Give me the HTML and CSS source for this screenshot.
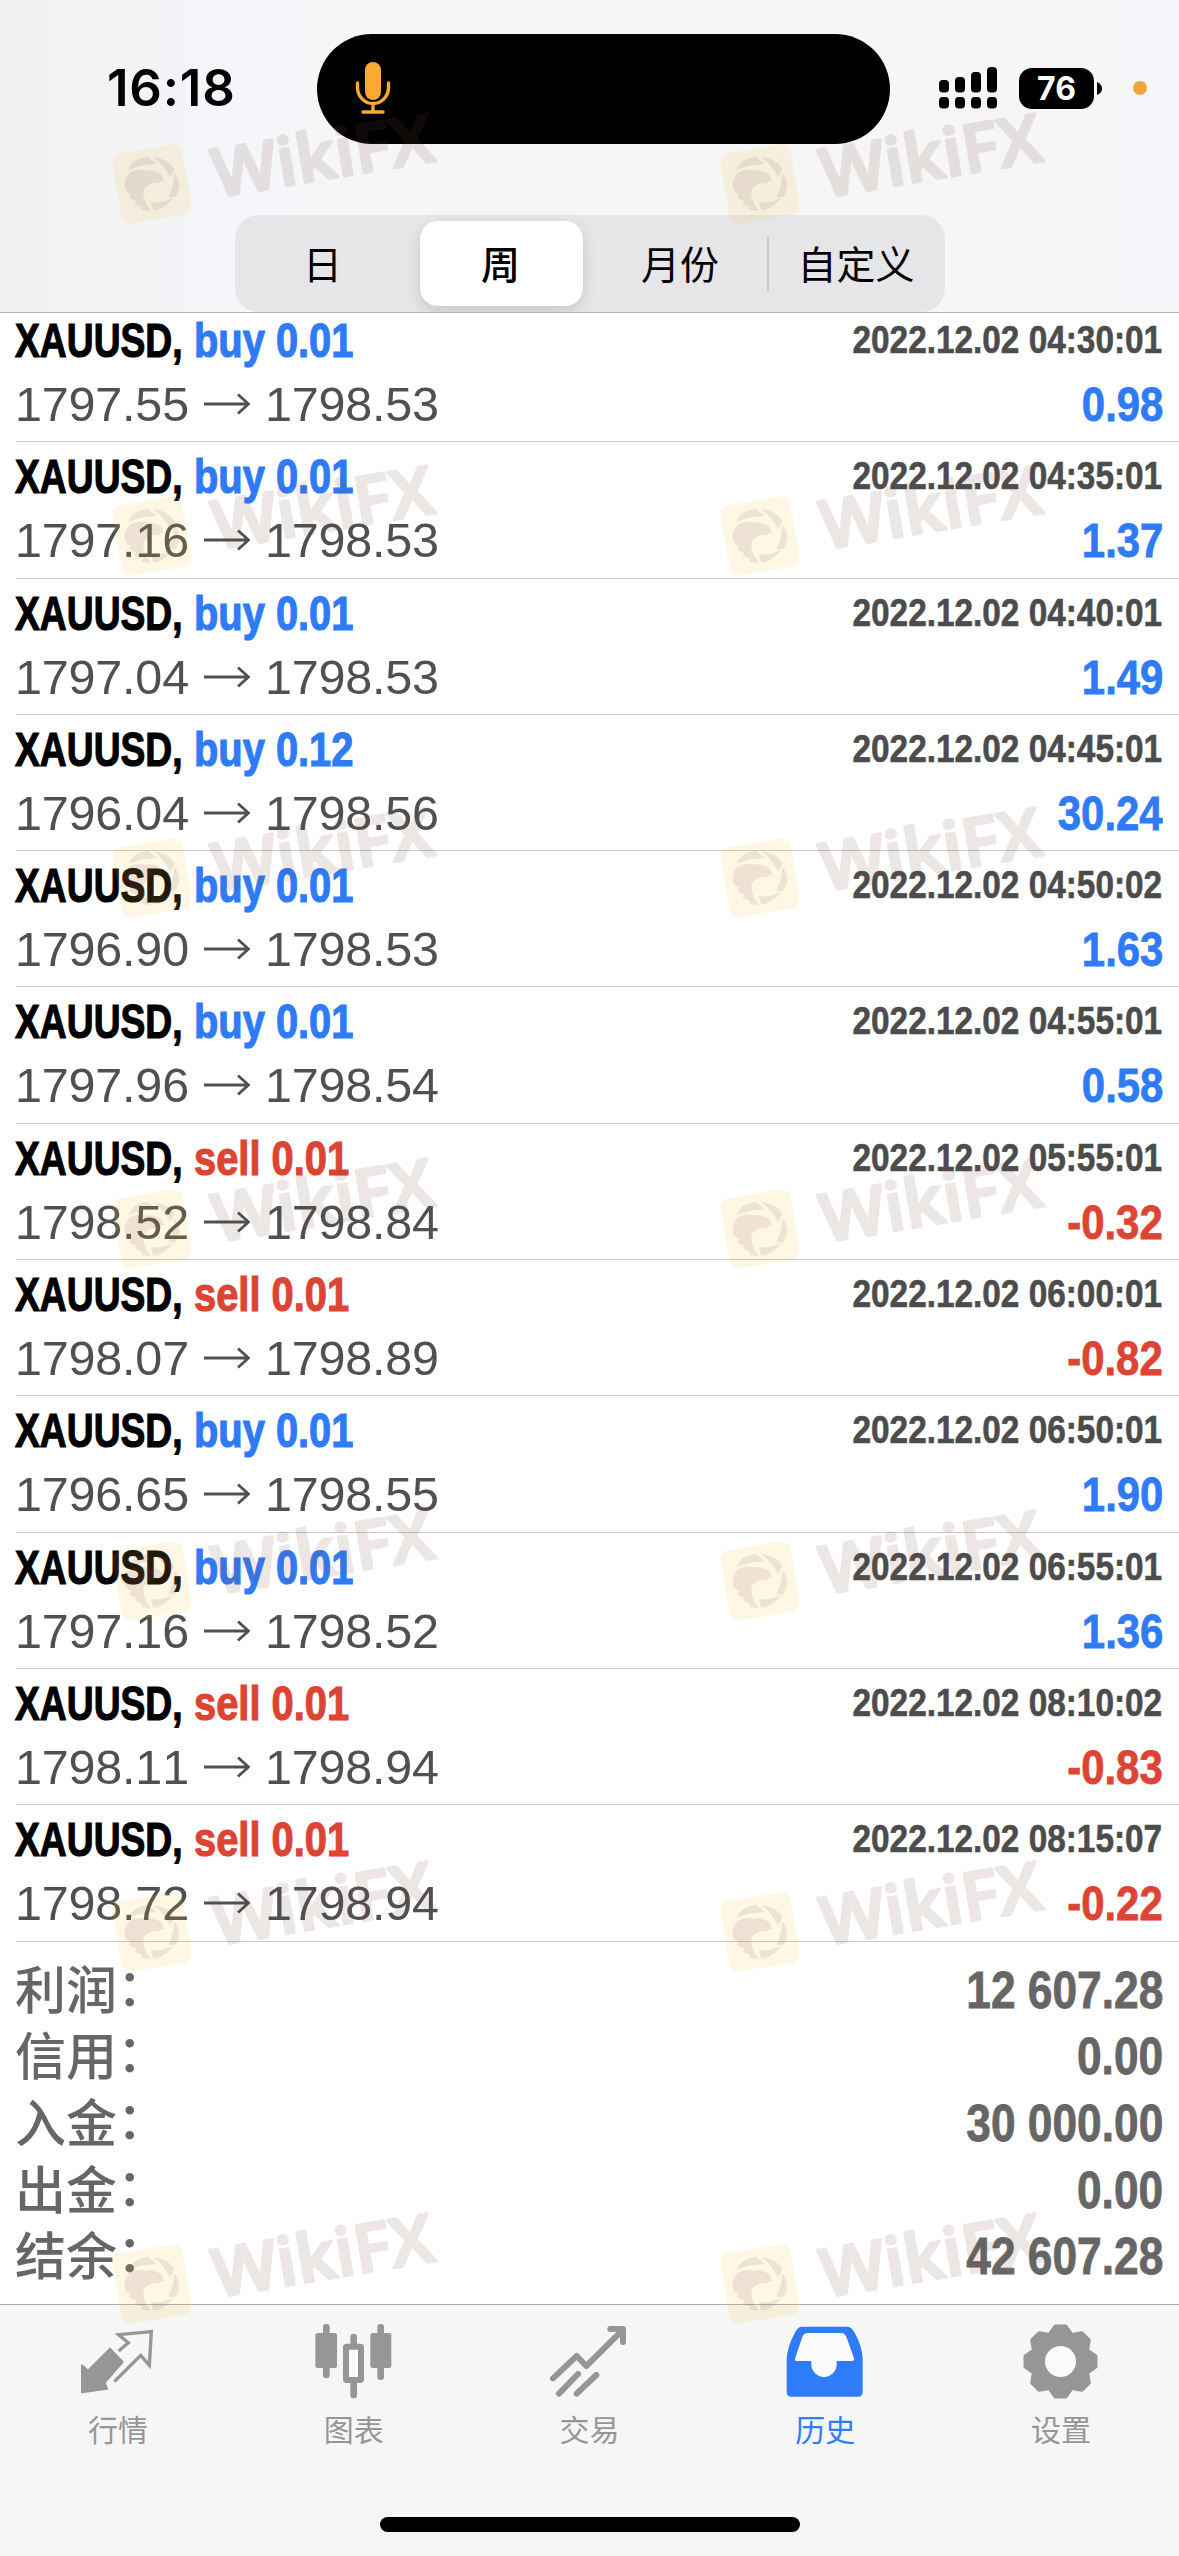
FILE: index.html
```html
<!DOCTYPE html>
<html lang="zh-CN">
<head>
<meta charset="utf-8">
<title>历史</title>
<link rel="stylesheet" href="styles.css">
</head>
<body>
<svg class="defs" aria-hidden="true">
  <symbol id="arrow" viewBox="0 0 46 24"><path d="M0 12H44M34 2.5 44.5 12 34 21.5" fill="none" stroke="#505050" stroke-width="2.8"/></symbol>
  <symbol id="mark" viewBox="0 0 340 140">
    <rect x="5.5" y="54.500" width="71" height="71" rx="9" transform="rotate(-9.5 41 90)" fill="rgba(248,196,50,.13)"/>
    <g transform="translate(-19 30.700) scale(.3333)" fill="rgba(115,72,90,.12)">
      <path d="M109 135Q124 100 168 96L194 118Q150 120 109 135Z"/>
      <path d="M184 97Q228 102 248 134L234 158Q215 120 184 97Z"/>
      <path d="M247 145Q262 162 262 186Q258 205 250 217L228 218Q246 185 247 145Z"/>
      <path d="M176 233Q212 236 243 220Q226 249 184 258Z"/>
      <path d="M98 190Q96 160 112 145Q135 130 165 138Q180 134 200 144Q214 152 215 170L200 168Q208 178 196 176Q180 172 172 180Q156 184 154 202Q152 228 176 257Q162 260 148 254L150 244Q138 246 128 236L132 226Q116 226 112 214L118 206Q104 204 103 196Z"/>
    </g>
    <text class="mark-text" transform="translate(105.500 103.500) rotate(-9.5)" textLength="223" lengthAdjust="spacingAndGlyphs">WikiFX</text>
  </symbol>
</svg>

<div class="screen">
  <header class="header">
    <div class="status">
      <div class="time">16:18</div>
      <div class="island">
        <svg width="36" height="54" viewBox="0 0 36 54"><rect x="10" y="1" width="16" height="38" rx="8" fill="#fba834"/><path d="M2.500 22v4.500a15.500 16 0 0 0 31 0V22M18 43v8M8 51H28" fill="none" stroke="#fba834" stroke-width="3.400" stroke-linecap="round"/></svg>
      </div>
      <div class="indicators">
        <svg width="59" height="42" viewBox="0 0 59 42"><g><rect x="0" y="13" width="10" height="12.500" rx="4"/><rect x="16" y="10" width="10" height="15.500" rx="4"/><rect x="32" y="5" width="10" height="20.500" rx="4"/><rect x="48" y="0" width="10" height="25.500" rx="4"/><rect x="0" y="30" width="10" height="11.500" rx="4"/><rect x="16" y="30" width="10" height="11.500" rx="4"/><rect x="32" y="30" width="10" height="11.500" rx="4"/><rect x="48" y="30" width="10" height="11.500" rx="4"/></g></svg>
        <div class="battery">76</div>
        <svg class="nub" width="5" height="13" viewBox="0 0 5 13"><path d="M0 0Q5 2 5 6.500T0 13Z"/></svg>
        <div class="dot"></div>
      </div>
    </div>
    <nav class="segments">
      <div class="segment">日</div>
      <div class="segment selected">周</div>
      <div class="segment">月份</div>
      <div class="divider"></div>
      <div class="segment">自定义</div>
    </nav>
  </header>

  <main class="list" id="list">
    <div class="row"><div class="deal"><b>XAUUSD,</b><b class="side buy">buy 0.01</b></div><time>2022.12.02 04:30:01</time><div class="prices"><span>1797.55</span><svg><use href="#arrow"/></svg><span>1798.53</span></div><b class="profit buy">0.98</b></div>
    <div class="row"><div class="deal"><b>XAUUSD,</b><b class="side buy">buy 0.01</b></div><time>2022.12.02 04:35:01</time><div class="prices"><span>1797.16</span><svg><use href="#arrow"/></svg><span>1798.53</span></div><b class="profit buy">1.37</b></div>
    <div class="row"><div class="deal"><b>XAUUSD,</b><b class="side buy">buy 0.01</b></div><time>2022.12.02 04:40:01</time><div class="prices"><span>1797.04</span><svg><use href="#arrow"/></svg><span>1798.53</span></div><b class="profit buy">1.49</b></div>
    <div class="row"><div class="deal"><b>XAUUSD,</b><b class="side buy">buy 0.12</b></div><time>2022.12.02 04:45:01</time><div class="prices"><span>1796.04</span><svg><use href="#arrow"/></svg><span>1798.56</span></div><b class="profit buy">30.24</b></div>
    <div class="row"><div class="deal"><b>XAUUSD,</b><b class="side buy">buy 0.01</b></div><time>2022.12.02 04:50:02</time><div class="prices"><span>1796.90</span><svg><use href="#arrow"/></svg><span>1798.53</span></div><b class="profit buy">1.63</b></div>
    <div class="row"><div class="deal"><b>XAUUSD,</b><b class="side buy">buy 0.01</b></div><time>2022.12.02 04:55:01</time><div class="prices"><span>1797.96</span><svg><use href="#arrow"/></svg><span>1798.54</span></div><b class="profit buy">0.58</b></div>
    <div class="row"><div class="deal"><b>XAUUSD,</b><b class="side sell">sell 0.01</b></div><time>2022.12.02 05:55:01</time><div class="prices"><span>1798.52</span><svg><use href="#arrow"/></svg><span>1798.84</span></div><b class="profit sell">-0.32</b></div>
    <div class="row"><div class="deal"><b>XAUUSD,</b><b class="side sell">sell 0.01</b></div><time>2022.12.02 06:00:01</time><div class="prices"><span>1798.07</span><svg><use href="#arrow"/></svg><span>1798.89</span></div><b class="profit sell">-0.82</b></div>
    <div class="row"><div class="deal"><b>XAUUSD,</b><b class="side buy">buy 0.01</b></div><time>2022.12.02 06:50:01</time><div class="prices"><span>1796.65</span><svg><use href="#arrow"/></svg><span>1798.55</span></div><b class="profit buy">1.90</b></div>
    <div class="row"><div class="deal"><b>XAUUSD,</b><b class="side buy">buy 0.01</b></div><time>2022.12.02 06:55:01</time><div class="prices"><span>1797.16</span><svg><use href="#arrow"/></svg><span>1798.52</span></div><b class="profit buy">1.36</b></div>
    <div class="row"><div class="deal"><b>XAUUSD,</b><b class="side sell">sell 0.01</b></div><time>2022.12.02 08:10:02</time><div class="prices"><span>1798.11</span><svg><use href="#arrow"/></svg><span>1798.94</span></div><b class="profit sell">-0.83</b></div>
    <div class="row"><div class="deal"><b>XAUUSD,</b><b class="side sell">sell 0.01</b></div><time>2022.12.02 08:15:07</time><div class="prices"><span>1798.72</span><svg><use href="#arrow"/></svg><span>1798.94</span></div><b class="profit sell">-0.22</b></div>
  </main>

  <section class="summary">
    <div class="total"><span>利润<i lang="zh-TW">：</i></span><b>12 607.28</b></div>
    <div class="total"><span>信用<i lang="zh-TW">：</i></span><b>0.00</b></div>
    <div class="total"><span>入金<i lang="zh-TW">：</i></span><b>30 000.00</b></div>
    <div class="total"><span>出金<i lang="zh-TW">：</i></span><b>0.00</b></div>
    <div class="total"><span>结余<i lang="zh-TW">：</i></span><b>42 607.28</b></div>
  </section>

  <footer class="footer">
    <nav class="tabs">
      <div class="tab">
        <svg viewBox="-6 18 300 270"><path d="M120 116 158 156 104 218 111 236 36 247 36 166 54 182Z" fill="#969696" stroke="#969696" stroke-width="6" stroke-linejoin="round"/><path d="M146 123 175 98 146 74 244 65 238 166 212 136 133 215" fill="none" stroke="#969696" stroke-width="10"/></svg>
        行情</div>
      <div class="tab">
        <svg viewBox="701 18 300 270"><g fill="#969696"><rect x="735" y="69" width="65" height="105" rx="7"/><rect x="758" y="42" width="20" height="163" rx="9"/><rect x="900" y="69" width="63" height="105" rx="7"/><rect x="921" y="42" width="20" height="168" rx="9"/><rect x="840" y="71" width="20" height="50" rx="9"/><rect x="840" y="205" width="20" height="60" rx="9"/></g><rect x="827" y="110" width="45" height="100" rx="2" fill="#fbfbfb" stroke="#969696" stroke-width="18" stroke-linejoin="round"/></svg>
        图表</div>
      <div class="tab">
        <svg viewBox="-1 18 300 270"><path d="M41 205 112 138 141 168 245 65M213 57H251V96M116 192 59 251M171 195 112 251" fill="none" stroke="#969696" stroke-width="18" stroke-linecap="round" stroke-linejoin="round"/></svg>
        交易</div>
      <div class="tab active">
        <svg viewBox="706 18 300 270"><path d="M785 50H925Q937 52 945 68Q968 110 969 145V245Q969 260 955 260H755Q741 260 741 245V145Q744 108 765 70Q774 50 785 50Z" fill="#2f7cf8"/><path d="M805 69H905Q915 70 920 80L943 145Q945 153 937 153H891V163A38 38 0 0 1 815 163V153H773Q763 153 767 143L788 80Q792 70 805 69Z" fill="#fafafa"/></svg>
        历史</div>
      <div class="tab">
        <svg viewBox="1011 2316 100 90"><g transform="translate(1060.5 2361.500)" fill="#969696" stroke="#969696" stroke-width="4" stroke-linejoin="round"><circle r="28"/><path id="tooth" d="M-10-28-5-35H5L10-28Z"/><use href="#tooth" transform="rotate(45)"/><use href="#tooth" transform="rotate(90)"/><use href="#tooth" transform="rotate(135)"/><use href="#tooth" transform="rotate(180)"/><use href="#tooth" transform="rotate(225)"/><use href="#tooth" transform="rotate(270)"/><use href="#tooth" transform="rotate(315)"/><circle r="15.500" fill="#fafafa" stroke="none"/></g></svg>
        设置</div>
    </nav>
    <div class="home"></div>
  </footer>

  <div class="marks">
    <svg><use href="#mark"/></svg><svg><use href="#mark"/></svg>
    <svg><use href="#mark"/></svg><svg><use href="#mark"/></svg>
    <svg><use href="#mark"/></svg><svg><use href="#mark"/></svg>
    <svg><use href="#mark"/></svg><svg><use href="#mark"/></svg>
    <svg><use href="#mark"/></svg><svg><use href="#mark"/></svg>
    <svg><use href="#mark"/></svg><svg><use href="#mark"/></svg>
    <svg><use href="#mark"/></svg><svg><use href="#mark"/></svg>
  </div>
</div>
</body>
</html>
```
FILE: styles.css
```css
* { box-sizing: border-box; }

body {
  margin: 0;
  font-family: "Liberation Sans", "Noto Sans CJK SC", sans-serif;
  font-kerning: none;
  background: #fff;
}

.defs { display: none; }
svg { display: block; flex: none; }

.screen {
  position: relative;
  width: 1179px;
  height: 2556px;
  overflow: hidden;
  display: flex;
  flex-direction: column;
}

/* Header */
.header {
  position: relative;
  z-index: 1;
  flex: none;
  height: 313px;
  padding-top: 34px;
  overflow: hidden;
  border-bottom: 1px solid #b2b2b4;
  background: linear-gradient(90deg, #f0f0f0, #f3f3f5 110px, #f5f6fa 230px, #f6f6f7 400px, #f6f6f6 900px, #f5f6f9);
}

.status {
  display: grid;
  grid-template-columns: 317px 573px 289px;
  height: 110px;
}

.time {
  padding-left: 107px;
  font: 600 51px/108px Inter, sans-serif;
  letter-spacing: 0.8px;
}

.island {
  display: flex;
  align-items: center;
  padding: 0 0 2px 38px;
  border-radius: 56px;
  background: #000;
}

.indicators {
  display: flex;
  align-items: center;
  padding: 0 0 2px 49px;
}

.battery {
  width: 75px;
  height: 41px;
  margin: 0 3px 0 21px;
  border-radius: 13px;
  background: #000;
  color: #fff;
  font: 700 32px/41px Inter, sans-serif;
  text-align: center;
}

.dot {
  width: 14px;
  height: 14px;
  margin-left: 31px;
  border-radius: 50%;
  background: #f2a43c;
}

.segments {
  display: flex;
  align-items: center;
  width: 710px;
  height: 97px;
  margin: 71px 0 0 235px;
  padding: 6px 0;
  border-radius: 24px;
  background: #e6e6e8;
}

.segment {
  width: 174px;
  height: 85px;
  font: 400 39px/82px "Noto Sans CJK SC", sans-serif;
  text-align: center;
}

.segment:first-child { width: 175px; }

.segment.selected {
  width: 163px;
  margin: 0 10px;
  padding-right: 2px;
  border-radius: 18px;
  background: #fff;
  box-shadow: 0 5px 14px rgba(0, 0, 0, .14);
  font-weight: 500;
}

.divider {
  width: 2px;
  height: 56px;
  background: #cbcbcd;
}

/* Deals */
.list {
  flex: none;
  margin-top: -7px;
}

.row {
  display: grid;
  grid-template-columns: auto auto;
  grid-template-rows: 70px 56px;
  justify-content: space-between;
  height: 136.3px;
  margin-left: 16px;
  padding-right: 16px;
  border-bottom: 1px solid #c6c6c8;
  font-size: 49px;
}

.deal {
  display: flex;
  margin-left: -1px;
  font-size: 49px;
  line-height: 68px;
  white-space: nowrap;
}

.deal b {
  width: 179px;
  transform: scaleX(.76);
  transform-origin: left;
  -webkit-text-stroke: 1.2px currentColor;
}

.deal .side { transform: scaleX(.813); }

.buy { color: #2f7bf5; }
.sell { color: #dd4433; }

.row time {
  margin-right: 1px;
  color: #4c4c4c;
  font-size: 39px;
  font-weight: 700;
  line-height: 68px;
  transform: scaleX(.855);
  transform-origin: right;
  -webkit-text-stroke: .6px currentColor;
}

.prices {
  display: flex;
  align-items: center;
  gap: 15px;
  margin-left: -1px;
  color: #505050;
  font-size: 48.5px;
  letter-spacing: -.2px;
  line-height: 56px;
}

.prices svg {
  width: 46px;
  height: 24px;
}

.profit {
  justify-self: end;
  line-height: 56px;
  transform: scaleX(.855);
  transform-origin: right;
  -webkit-text-stroke: .8px currentColor;
}

/* Totals */
.summary {
  flex: none;
  height: 362px;
  padding: 15px 16px 0 16px;
  color: #666;
}

.total {
  display: flex;
  justify-content: space-between;
  height: 66.67px;
  font-size: 52px;
  line-height: 66px;
}

.total span {
  margin: -3px 0 0 -1px;
  font: 500 51px/66px "Noto Sans CJK SC", sans-serif;
}

/* Half-width colon centred on the height of the characters */
.total i {
  font-family: "Noto Sans CJK TC", sans-serif;
  font-style: normal;
  font-feature-settings: "halt";
}

.total b {
  transform: scaleX(.852);
  transform-origin: right;
  -webkit-text-stroke: .8px currentColor;
}

/* Tab bar */
.footer {
  flex: 1;
  border-top: 1px solid #aeaeb0;
  background: #f6f6f6;
}

.tabs {
  display: grid;
  grid-template-columns: repeat(5, 1fr);
  padding-top: 11px;
}

.tab {
  display: flex;
  flex-direction: column;
  align-items: center;
  height: 201px;
  color: #969696;
  font: 400 30px/45px "Noto Sans CJK SC", sans-serif;
}

.tab svg {
  width: 100px;
  height: 90px;
}

.tab.active { color: #2f7cf8; }

.home {
  width: 420px;
  height: 15px;
  margin: 0 auto;
  border-radius: 8px;
  background: #000;
}

/* Watermark layer over the whole screen */
.marks {
  position: absolute;
  inset: 94px 0 0 111px;
  z-index: 2;
  display: grid;
  grid-template-columns: 608px 460px;
  grid-template-rows: 352px 341.5px 351.5px 351.5px 351.5px 352px 140px;
  pointer-events: none;
}

.marks svg {
  width: 340px;
  height: 140px;
}

.mark-text {
  font: 600 67px "Open Sans", sans-serif;
  fill: #734841;
  stroke: #734841;
  stroke-width: 3px;
  stroke-linejoin: round;
  opacity: .13;
}
```
